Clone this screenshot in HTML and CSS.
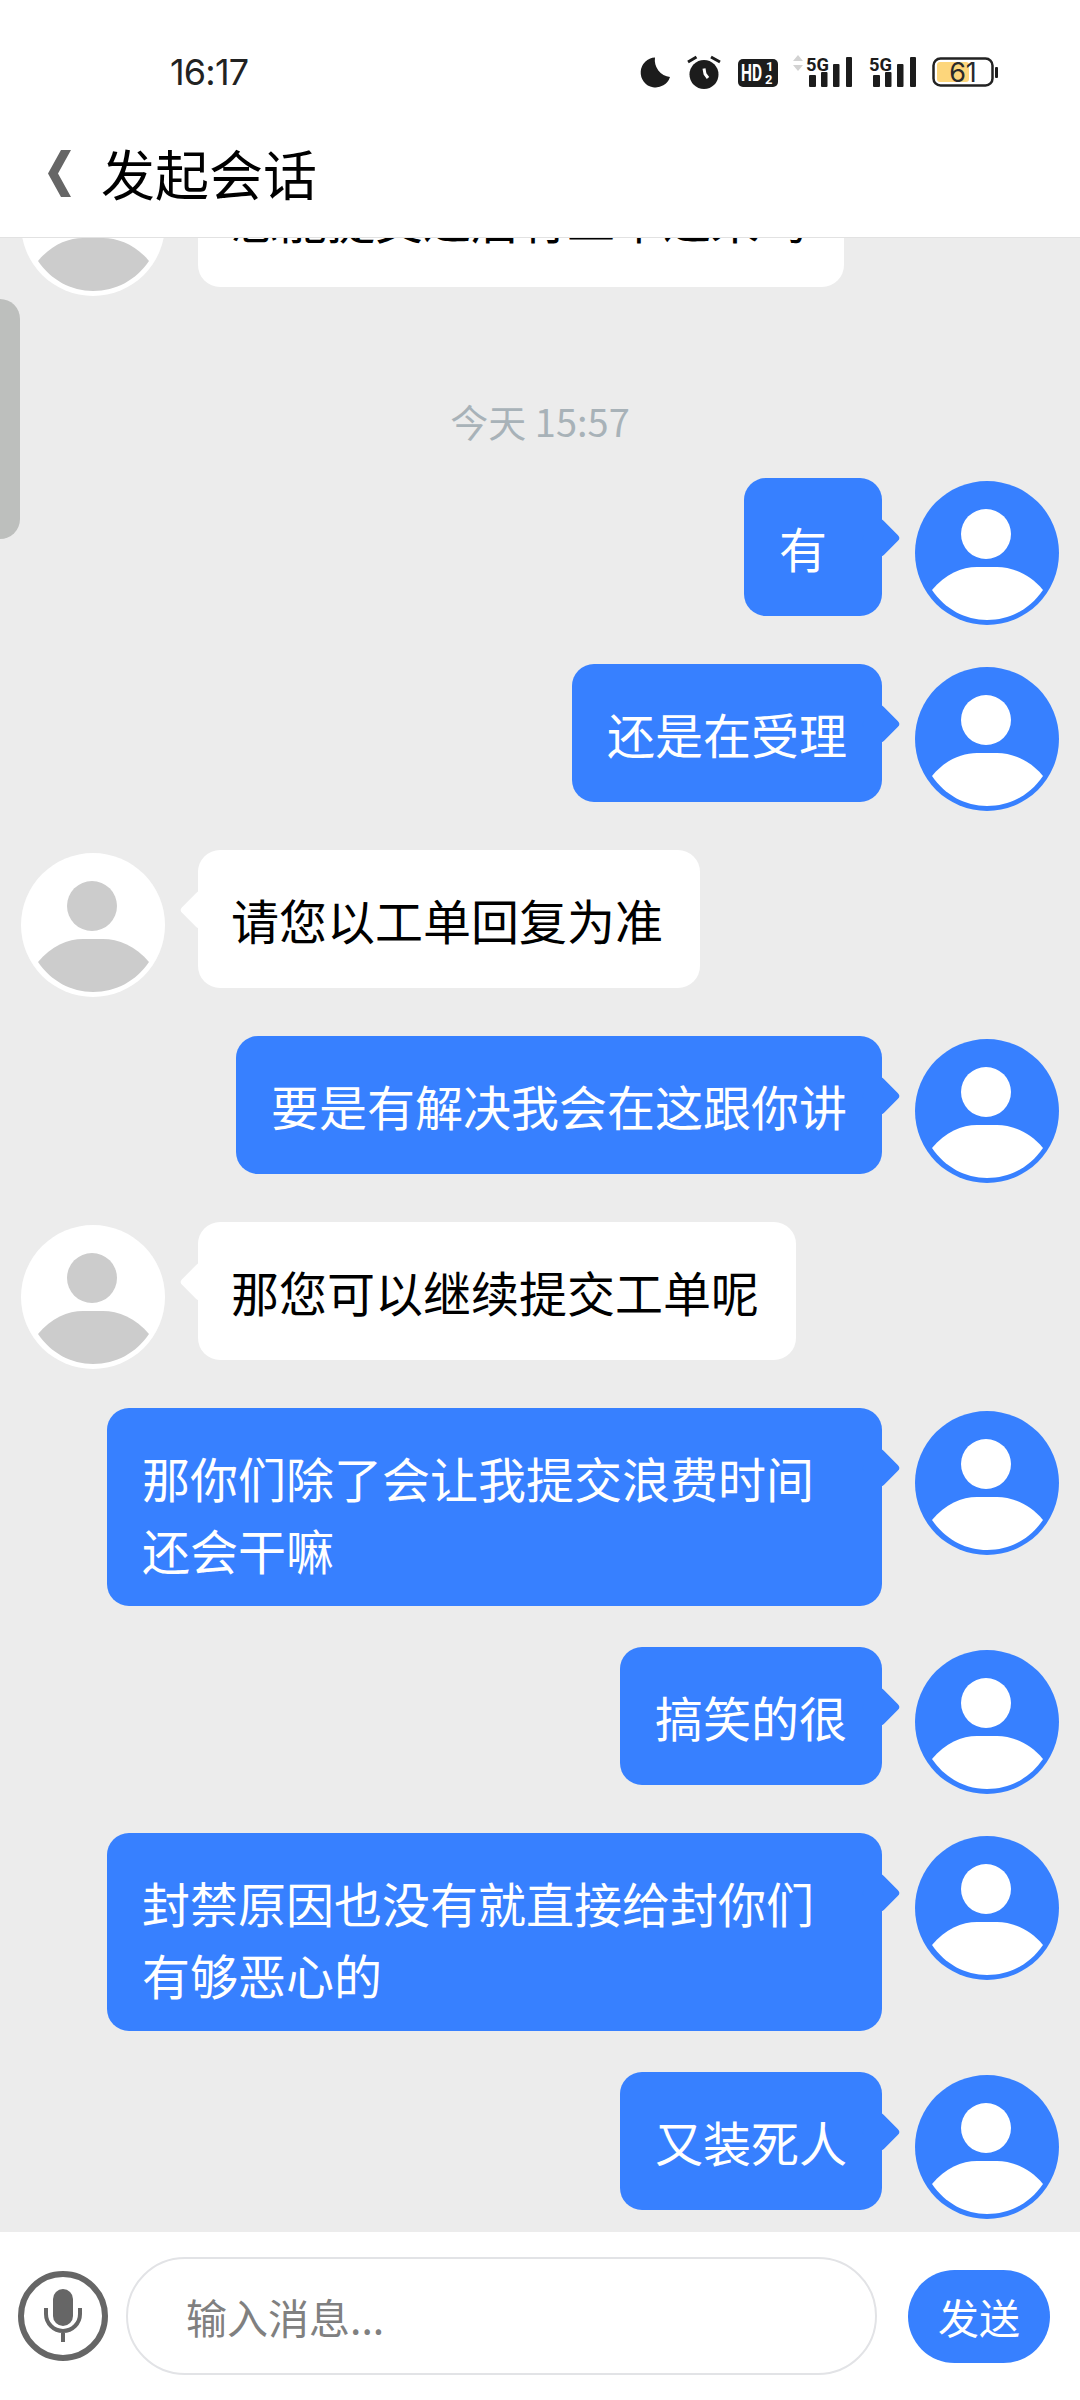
FILE: index.html
```html
<!DOCTYPE html>
<html lang="zh">
<head>
    <meta charset="UTF-8">
    <title>发起会话</title>
    <meta name="viewport" content="width=device-width, initial-scale=1.0"/>
    <link rel="stylesheet" href="styles.css">
</head>
<body>
<svg class="defs" width="0" height="0">
    <symbol id="person" viewBox="0 0 144 144">
        <circle cx="71" cy="53" r="25"/>
        <path d="M17 109 C30 93 47 86 62 86 H82 C97 86 115 93 128 109 C115 128 95 139 72 139 C50 139 30 128 17 109 Z"/>
    </symbol>
    <symbol id="bars" viewBox="0 0 48 44">
        <rect x="3" y="25" width="7" height="12" rx="1"/>
        <rect x="15" y="22" width="6.5" height="15" rx="1"/>
        <rect x="27" y="14" width="6.5" height="23" rx="1"/>
        <rect x="40" y="7" width="6" height="30" rx="1"/>
    </symbol>
</svg>
<div id="container">
    <div class="status-bar">
        <span class="clock">16:17</span>
        <div class="status-icons">
            <svg class="icon" width="30" height="44" viewBox="0 0 30 44">
                <path d="M14 7.5 A15 15 0 1 0 29 27 A17 17 0 0 1 14 7.5 Z"/>
            </svg>
            <svg class="icon" width="35" height="44" viewBox="0 0 35 44">
                <circle cx="17" cy="24.5" r="14.5"/>
                <path class="ear" d="M1 12 L9.5 7 M24 7 L33 12"/>
                <path class="hand" d="M17 18.5 L18 24 L21 28"/>
            </svg>
            <svg class="icon" width="38" height="44" viewBox="0 0 38 44">
                <rect x="0" y="9" width="40" height="28" rx="5"/>
                <text class="hd" x="3" y="31" textLength="21" lengthAdjust="spacingAndGlyphs">HD</text>
                <text class="hd-small" x="28" y="21">1</text>
                <text class="hd-small" x="27" y="34">2</text>
            </svg>
            <svg class="icon" width="60" height="44" viewBox="0 0 60 44">
                <path class="arrows" d="M6 5 L11 11 H1 Z M6 21 L11 15 H1 Z"/>
                <text class="net" x="14" y="21" textLength="23" lengthAdjust="spacingAndGlyphs">5G</text>
                <use href="#bars" x="14" y="0" width="48" height="44"/>
            </svg>
            <svg class="icon" width="48" height="44" viewBox="0 0 48 44">
                <text class="net" x="1" y="21" textLength="23" lengthAdjust="spacingAndGlyphs">5G</text>
                <use href="#bars" x="2" y="0" width="48" height="44"/>
            </svg>
            <svg class="icon" width="68" height="44" viewBox="0 0 68 44">
                <rect class="batt-shell" x="1.5" y="8.5" width="59" height="27" rx="7"/>
                <rect class="batt-fill" x="5" y="12" width="32" height="20" rx="3"/>
                <rect x="63" y="17" width="3" height="11" rx="1"/>
                <text class="batt-num" x="31" y="32" text-anchor="middle">61</text>
            </svg>
        </div>
    </div>

    <div class="title-bar">
        <svg class="back" width="24" height="48" viewBox="0 0 24 48">
            <path d="M23 0 H13 L0 23.5 L13 47 H23 L10 23.5 Z"/>
        </svg>
        <h1 class="title">发起会话</h1>
    </div>

    <div class="messages">
        <div class="scroll-thumb"></div>

        <div class="row them first">
            <div class="avatar"><svg><use href="#person"/></svg></div>
            <div class="bubble">您能提交过后有工单过来吗</div>
        </div>

        <div class="time">今天 15:57</div>

        <div class="row me">
            <div class="bubble">有</div>
            <div class="avatar"><svg><use href="#person"/></svg></div>
        </div>
        <div class="row me">
            <div class="bubble">还是在受理</div>
            <div class="avatar"><svg><use href="#person"/></svg></div>
        </div>
        <div class="row them">
            <div class="avatar"><svg><use href="#person"/></svg></div>
            <div class="bubble">请您以工单回复为准</div>
        </div>
        <div class="row me">
            <div class="bubble">要是有解决我会在这跟你讲</div>
            <div class="avatar"><svg><use href="#person"/></svg></div>
        </div>
        <div class="row them">
            <div class="avatar"><svg><use href="#person"/></svg></div>
            <div class="bubble">那您可以继续提交工单呢</div>
        </div>
        <div class="row me">
            <div class="bubble">那你们除了会让我提交浪费时间还会干嘛</div>
            <div class="avatar"><svg><use href="#person"/></svg></div>
        </div>
        <div class="row me">
            <div class="bubble">搞笑的很</div>
            <div class="avatar"><svg><use href="#person"/></svg></div>
        </div>
        <div class="row me">
            <div class="bubble">封禁原因也没有就直接给封你们有够恶心的</div>
            <div class="avatar"><svg><use href="#person"/></svg></div>
        </div>
        <div class="row me">
            <div class="bubble">又装死人</div>
            <div class="avatar"><svg><use href="#person"/></svg></div>
        </div>
    </div>

    <div class="input-bar">
        <svg class="mic" width="90" height="90" viewBox="0 0 90 90">
            <circle class="mic-ring" cx="45" cy="45" r="42"/>
            <rect class="mic-body" x="35" y="18" width="20" height="37" rx="10"/>
            <path class="mic-arm" d="M28 37 V43 A17 17 0 0 0 62 43 V37 M45 60 V71"/>
        </svg>
        <div class="input">输入消息...</div>
        <div class="send">发送</div>
    </div>
</div>
</body>
</html>
```
FILE: styles.css
```css
html, body {
    margin: 0;
    padding: 0;
    width: 1080px;
    height: 2400px;
    background-color: #ffffff;
}

#container {
    width: 1080px;
    height: 2400px;
    display: flex;
    flex-direction: column;
    overflow: hidden;
    font-family: "Noto Sans CJK SC", "Noto Sans", sans-serif;
}

.defs {
    position: absolute;
}

/* status bar */
.status-bar {
    height: 110px;
    flex: none;
    display: flex;
    align-items: center;
    justify-content: space-between;
    padding: 34px 80px 0 170px;
    box-sizing: border-box;
}

.clock {
    font-family: "Inter", "Noto Sans", sans-serif;
    font-size: 36px;
    color: #222222;
    letter-spacing: -0.8px;
}

.status-icons {
    display: flex;
    align-items: center;
    gap: 16px;
}

.icon {
    display: block;
    overflow: visible;
    fill: #1c1c1c;
}

.icon .ear {
    fill: none;
    stroke: #1c1c1c;
    stroke-width: 3;
}

.icon .hand {
    fill: none;
    stroke: #ffffff;
    stroke-width: 3;
}

.icon .hd {
    fill: #ffffff;
    font-family: "Roboto", sans-serif;
    font-weight: 700;
    font-size: 23px;
}

.icon .hd-small {
    fill: #ffffff;
    font-family: "Roboto", sans-serif;
    font-weight: 700;
    font-size: 13px;
}

.icon .arrows {
    fill: #d2d2d2;
}

.icon .net {
    font-family: "Roboto", sans-serif;
    font-weight: 700;
    font-size: 19px;
}

.icon .batt-shell {
    fill: none;
    stroke: #222222;
    stroke-width: 2.5;
}

.icon .batt-fill {
    fill: #fdd67b;
}

.icon .batt-num {
    font-family: "Inter", sans-serif;
    font-size: 27px;
    fill: #2a2a2a;
}

/* title bar */
.title-bar {
    height: 128px;
    flex: none;
    display: flex;
    align-items: center;
    padding-left: 48px;
    box-sizing: border-box;
    border-bottom: 1px solid #e2e2e2;
}

.back {
    fill: #666666;
    flex: none;
}

.title {
    margin: 0 0 2px 29px;
    font-size: 54px;
    font-weight: 400;
    color: #000000;
}

/* chat */
.messages {
    position: relative;
    flex: 1;
    min-height: 0;
    overflow: hidden;
    background-color: #ececec;
}

.scroll-thumb {
    position: absolute;
    left: 0;
    top: 61px;
    width: 20px;
    height: 240px;
    background-color: #bdbfbd;
    border-radius: 0 20px 20px 0;
}

.row {
    display: flex;
    align-items: flex-start;
    gap: 33px;
    min-height: 186px;
    padding: 0 21px 39px;
    box-sizing: border-box;
}

.row.first {
    margin-top: -89px;
}

.me {
    justify-content: flex-end;
}

.avatar {
    width: 144px;
    height: 144px;
    flex: none;
    margin-top: 3px;
    border-radius: 50%;
}

.avatar svg {
    display: block;
    width: 144px;
    height: 144px;
    fill: currentColor;
}

.me .avatar {
    background-color: #3780ff;
    color: #ffffff;
}

.them .avatar {
    background-color: #ffffff;
    color: #cccccc;
}

.bubble {
    position: relative;
    box-sizing: border-box;
    max-width: 775px;
    min-width: 138px;
    min-height: 138px;
    margin-bottom: 2px;
    padding: 33px 35px 21px;
    border-radius: 22px;
    font-size: 48px;
    line-height: 72px;
}

.bubble::after {
    content: "";
    position: absolute;
    top: 46px;
    width: 28px;
    height: 28px;
    border-radius: 4px;
    transform: rotate(45deg);
    background-color: inherit;
}

.me .bubble {
    background-color: #3780ff;
    color: #ffffff;
}

.me .bubble::after {
    right: -13px;
}

.them .bubble {
    padding-left: 33px;
    padding-right: 37px;
    background-color: #ffffff;
    color: #000000;
}

.them .bubble::after {
    left: -13px;
}

.time {
    margin: 61px 0 32px;
    text-align: center;
    font-size: 38px;
    line-height: 50px;
    color: #a8b2b8;
}

/* input */
.input-bar {
    height: 168px;
    flex: none;
    display: flex;
    align-items: center;
    padding: 0 30px 0 18px;
    box-sizing: border-box;
    background-color: #ffffff;
}

.mic {
    flex: none;
    margin-right: 18px;
}

.mic-ring {
    fill: none;
    stroke: #666666;
    stroke-width: 6;
}

.mic-body {
    fill: #666666;
}

.mic-arm {
    fill: none;
    stroke: #666666;
    stroke-width: 4;
}

.input {
    flex: 1;
    height: 118px;
    line-height: 114px;
    box-sizing: border-box;
    padding-left: 58px;
    border: 2px solid #e2e3e6;
    border-radius: 59px;
    font-size: 41px;
    color: #808080;
}

.send {
    flex: none;
    width: 142px;
    height: 93px;
    margin-left: 31px;
    border-radius: 47px;
    background-color: #3780ff;
    color: #ffffff;
    font-size: 41px;
    line-height: 93px;
    text-align: center;
}
```
